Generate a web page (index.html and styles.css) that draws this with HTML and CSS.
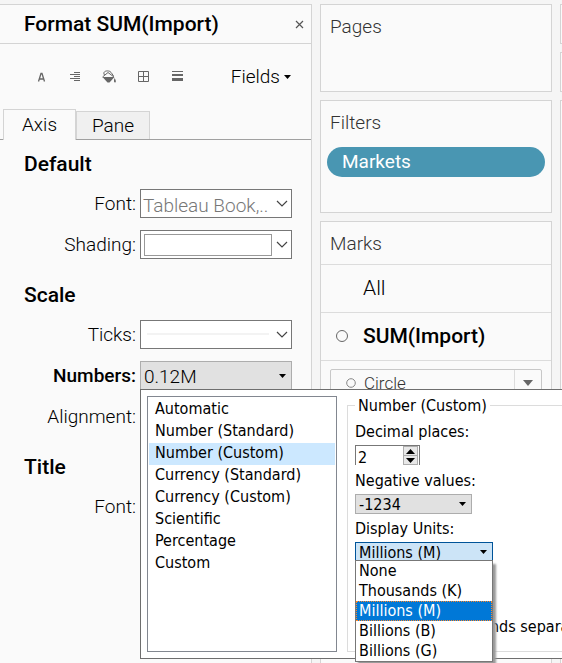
FILE: index.html
```html
<!DOCTYPE html>
<html lang="en">
<head>
<meta charset="utf-8">
<title>Format SUM(Import)</title>
<link rel="stylesheet" href="styles.css">
</head>
<body>
<div class="workspace">
  <section class="format">
    <header class="format-head">
      <h1>Format SUM(Import)</h1>
      <button class="close" aria-label="Close"><svg width="9" height="9" viewBox="0 0 9 9"><path d="M1 1l7 7M8 1l-7 7" stroke="#555" stroke-width="1.200" fill="none"/></svg></button>
    </header>
    <div class="toolbar">
      <div class="tools">
        <button aria-label="Font"><svg width="16" height="16" viewBox="0 0 16 16"><path d="M5.500 12.500L8 4.500h1l2.500 8M6.500 10h4" stroke="#666" stroke-width="1.300" fill="none"/></svg></button>
        <button aria-label="Alignment"><svg width="16" height="16" viewBox="0 0 16 16"><path d="M7 3.500h6M3 5.500h10M7 7.500h6M3 9.500h10M7 11.500h6" stroke="#666" fill="none"/></svg></button>
        <button aria-label="Shading"><svg width="16" height="16" viewBox="0 0 16 16"><path d="M1.500 8L7 3.500l6 4.500M3.500 6c-2-3 1-4.500 4-4 2 0 3 2 5 5" stroke="#666" fill="none"/><path d="M1.500 8h12L8.500 13.500h-2zM13.500 9c2 3 1.500 4.500.5 4.500s-1.500-1.500-.5-4.500z" fill="#666"/></svg></button>
        <button aria-label="Borders"><svg width="16" height="16" viewBox="0 0 16 16"><path d="M3.500 2.500h10v10h-10zM8.500 2.500v10M3.500 7.500h10" stroke="#666" fill="none"/></svg></button>
        <button aria-label="Lines"><svg width="16" height="16" viewBox="0 0 16 16"><path d="M3 2h11v1H3zM3 5h11v2H3zM3 9h11v3H3z" fill="#666"/></svg></button>
      </div>
      <button class="fields">Fields<svg width="7" height="4" viewBox="0 0 7 4"><path d="M0 0h7L3.500 4z"/></svg></button>
    </div>
    <div class="tabs" role="tablist">
      <button role="tab" aria-selected="true" class="tab active">Axis</button>
      <button role="tab" aria-selected="false" class="tab">Pane</button>
    </div>
    <div class="groups">
      <section class="group">
        <h2>Default</h2>
        <div class="row">
          <label for="font">Font:</label>
          <div class="combo">
            <select id="font" class="muted"><option>Tableau Book,..</option></select>
            <svg class="chev" width="12" height="7" viewBox="0 0 12 7"><path d="M1 1l5 5 5-5"/></svg>
          </div>
        </div>
        <div class="row">
          <label for="shading">Shading:</label>
          <div class="combo">
            <select id="shading"><option aria-label="White"></option></select>
            <span class="swatch"></span>
            <svg class="chev" width="12" height="7" viewBox="0 0 12 7"><path d="M1 1l5 5 5-5"/></svg>
          </div>
        </div>
      </section>
      <section class="group">
        <h2>Scale</h2>
        <div class="row">
          <label for="ticks">Ticks:</label>
          <div class="combo">
            <select id="ticks"><option aria-label="Thin line"></option></select>
            <span class="stroke"></span>
            <svg class="chev" width="12" height="7" viewBox="0 0 12 7"><path d="M1 1l5 5 5-5"/></svg>
          </div>
        </div>
        <div class="row">
          <label for="numbers" class="strong">Numbers:</label>
          <div class="combo gray">
            <select id="numbers"><option>0.12M</option></select>
            <svg class="tri" width="7" height="4" viewBox="0 0 7 4"><path d="M0 0h7L3.500 4z"/></svg>
            <div class="popup">
              <select class="formats" size="8" aria-label="Number format">
                <option>Automatic</option>
                <option>Number (Standard)</option>
                <option selected>Number (Custom)</option>
                <option>Currency (Standard)</option>
                <option>Currency (Custom)</option>
                <option>Scientific</option>
                <option>Percentage</option>
                <option>Custom</option>
              </select>
              <fieldset class="custom">
                <legend>Number (Custom)</legend>
                <label for="decimals">Decimal places:</label>
                <div class="spin">
                  <input id="decimals" type="text" inputmode="numeric" value="2">
                  <div class="steps">
                    <button aria-label="Increase"><svg width="9" height="5" viewBox="0 0 9 5"><path d="M0 5h9L4.500 0z"/></svg></button>
                    <button aria-label="Decrease"><svg width="9" height="5" viewBox="0 0 9 5"><path d="M0 0h9L4.500 5z"/></svg></button>
                  </div>
                </div>
                <label for="negative">Negative values:</label>
                <div class="pick negative">
                  <select id="negative"><option>-1234</option></select>
                  <svg class="tri" width="7" height="4" viewBox="0 0 7 4"><path d="M0 0h7L3.500 4z"/></svg>
                </div>
                <label for="units">Display Units:</label>
                <div class="pick units">
                  <select id="units"><option>Millions (M)</option></select>
                  <svg class="tri" width="7" height="4" viewBox="0 0 7 4"><path d="M0 0h7L3.500 4z"/></svg>
                  <select class="menu" size="5" aria-label="Display unit choices">
                    <option>None</option>
                    <option>Thousands (K)</option>
                    <option selected>Millions (M)</option>
                    <option>Billions (B)</option>
                    <option>Billions (G)</option>
                  </select>
                </div>
                <label class="check"><input type="checkbox">Include thousands separators</label>
              </fieldset>
            </div>
          </div>
        </div>
        <div class="row"><span class="label">Alignment:</span></div>
      </section>
      <section class="group">
        <h2>Title</h2>
        <div class="row"><span class="label">Font:</span></div>
      </section>
    </div>
  </section>
  <div class="shelves">
    <section class="card pages"><h3>Pages</h3></section>
    <section class="card filters"><h3>Filters</h3><button class="pill">Markets</button></section>
    <section class="card marks">
      <h3>Marks</h3>
      <button class="mark"><span></span>All</button>
      <button class="mark current"><span><svg width="12" height="12" viewBox="0 0 12 12"><circle cx="6" cy="6" r="5.500" fill="none" stroke="#666"/></svg></span>SUM(Import)</button>
      <div class="type">
        <svg class="dot" width="10" height="10" viewBox="0 0 10 10"><circle cx="5" cy="5" r="4.300" fill="none" stroke="#888"/></svg>
        <select aria-label="Mark type"><option>Circle</option></select>
        <span class="arrow"><svg width="10" height="6" viewBox="0 0 10 6"><path d="M0 0h10L5 6z" fill="#666"/></svg></span>
      </div>
    </section>
  </div>
  <div class="view"><div class="card columns"></div><div class="card rows"></div><div class="card sheet"></div></div>
</div>
</body>
</html>
```
FILE: styles.css
```css
* { box-sizing: border-box; }
body {
  margin: 0;
  background: #f5f5f5;
  color: #000;
  font: 300 19px/24px Roboto, "Liberation Sans", sans-serif;
  overflow: hidden;
}
h1, h2, h3 { margin: 0; }
button, select, input { font: inherit; color: inherit; border-radius: 0; margin: 0; }
button { border: 0; padding: 0; background: none; text-align: left; }
select { appearance: none; }
svg { display: block; }

.workspace {
  display: grid;
  grid-template-columns: minmax(0, 312fr) minmax(0, 232fr) 2px;
  gap: 8px;
  min-height: 100vh;
  padding-top: 4px;
}
.format { background: #fafafa; border: solid #d4d4d4; border-width: 1px 1px 0 0; }
.format-head {
  display: flex;
  align-items: center;
  justify-content: space-between;
  height: 39px;
  padding: 0 7px 0 24px;
  border-bottom: 1px solid #d4d4d4;
}
h1, h2 { font-size: 21px; font-weight: 500; line-height: 28px; }

.toolbar { display: flex; align-items: center; justify-content: space-between; height: 65px; padding: 0 20px 0 33px; }
.tools { display: flex; gap: 18px; }
.fields { display: flex; align-items: center; gap: 4px; }

.tabs { display: flex; align-items: flex-end; height: 31px; padding-left: 3px; border-bottom: 1px solid #a0a0a0; }
.tab { height: 28px; width: 74px; border: 1px solid #d4d4d4; border-bottom: 0; background: #f0f0f0; text-align: center; }
.active { height: 31px; width: 73px; margin-bottom: -1px; background: #fafafa; }

.groups { padding-top: 10px; }
.group { display: grid; gap: 12px; margin-bottom: 22px; }
h2 { padding-left: 24px; margin-bottom: -1px; }
.row { display: grid; grid-template-columns: 136px minmax(0, 152px); gap: 4px; height: 29px; line-height: 29px; }
.row > label, .label { text-align: right; }
.strong { font-weight: 500; }
.combo { position: relative; }
.combo > select { width: 100%; height: 29px; padding: 0 20px 0 3px; background: #fff; border: 1px solid #777; }
.combo > .muted { padding: 1px 18px 0 2px; color: #777; }
.gray > select { background: #e1e1e1; border-color: #adadad; }
.chev { position: absolute; right: 4px; top: 11px; fill: none; stroke: #444; stroke-width: 1.2; }
.tri { position: absolute; right: 6px; top: 50%; margin-top: -2px; }
.swatch { position: absolute; inset: 4px 20px 4px 4px; border: 1px solid #999; }
.stroke { position: absolute; top: 13px; left: 7px; right: 23px; height: 2px; background: #f3f3f3; }

.popup {
  position: absolute;
  z-index: 1;
  top: 28px;
  left: 0;
  display: flex;
  gap: 10px;
  padding: 6px 0 6px 6px;
  width: calc(100vw - 140px);
  height: 270px;
  border: 1px solid #6e6e6e;
  border-right: 0;
  background: #fff;
  font: 16px/20px "DejaVu Sans Condensed", sans-serif;
}
.formats { flex: 0 0 190px; padding: 2px 1px; border: 1px solid #828790; background: #fff; overflow: hidden; }
.formats option { height: 22px; min-height: 22px; padding: 0 0 0 6px; line-height: 22px; }
.formats option:checked { background: #cce8ff linear-gradient(#cce8ff, #cce8ff); color: #000; }
.custom { flex: 1; margin: 0; padding: 6px 0 0 7px; border: 1px solid #dcdcdc; border-right: 0; min-width: 0; }
.custom legend { padding: 0 3px; line-height: 19px; }
.custom label { display: block; line-height: 22px; margin-bottom: 2px; }
.spin { display: flex; width: 65px; height: 20px; margin-bottom: 5px; border: solid #777; border-width: 1px 1px 0; }
.spin input { flex: 1; min-width: 0; padding: 3px 2px 0; border: 0; line-height: 16px; background: none; }
.steps { display: grid; width: 15px; margin-right: 1px; border: 1px solid #adadad; background: #e8e8e8; }
.steps button { display: grid; place-items: center; }
.steps button + button { border-top: 1px solid #adadad; }
.pick { position: relative; height: 20px; margin-bottom: 4px; }
.pick > select { width: 100%; height: 20px; padding: 1px 3px 0; border: 1px solid #adadad; background: #e1e1e1; line-height: 18px; }
.negative { width: 117px; }
.units { width: 138px; }
.units > select { background: #cce4f7; border-color: #005499; }
.units > .menu {
  position: absolute;
  top: 18px;
  left: 0;
  height: 102px;
  padding: 0;
  background: #fff;
  border-color: #777;
  box-shadow: 3px 4px 2px #999;
  overflow: hidden;
}
.menu option { height: 20px; min-height: 20px; padding: 0 3px; line-height: 20px; }
.menu option:checked { background: #0078d7 linear-gradient(#0078d7, #0078d7); color: #fff; outline: 1px dotted #ff8728; outline-offset: -1px; }
.custom .check { display: flex; align-items: center; gap: 16px; margin-top: 54px; white-space: nowrap; overflow: hidden; }

.shelves { display: flex; flex-direction: column; gap: 8px; }
.card { border: 1px solid #d4d4d4; background: #fafafa; }
.card h3 { padding: 10px 9px; font-size: 19px; font-weight: 300; color: #333; }
.pages { height: 88px; }
.filters { height: 113px; padding: 0 6px; }
.filters h3 { padding: 10px 3px 12px; }
.pill { display: block; width: 100%; height: 30px; padding-left: 15px; border-radius: 15px; background: #4996b2; color: #fff; font-weight: 400; }
.marks { flex: 1; border-bottom: 0; }
.marks h3 { height: 42px; }
.mark { display: grid; grid-template-columns: 27px 1fr; align-items: center; width: 100%; height: 48px; padding: 0 0 1px 15px; border-top: 1px solid #dcdcdc; font-size: 21px; }
.current { border-bottom: 1px solid #dcdcdc; height: 49px; font-weight: 500; }
.type { display: flex; align-items: center; height: 28px; margin: 8px 9px; padding-left: 15px; border: 1px solid #c8c8c8; border-radius: 2px; }
.type select { flex: 1; min-width: 0; padding: 0 0 0 8px; border: 0; background: none; font-size: 17px; color: #333; }
.arrow { display: grid; place-items: center; width: 27px; height: 26px; border-left: 1px solid #dcdcdc; }

.view { display: flex; flex-direction: column; gap: 8px; }
.view .card { border-right: 0; }
.columns, .rows { height: 40px; }
.sheet { flex: 1; border-bottom: 0; }
```
